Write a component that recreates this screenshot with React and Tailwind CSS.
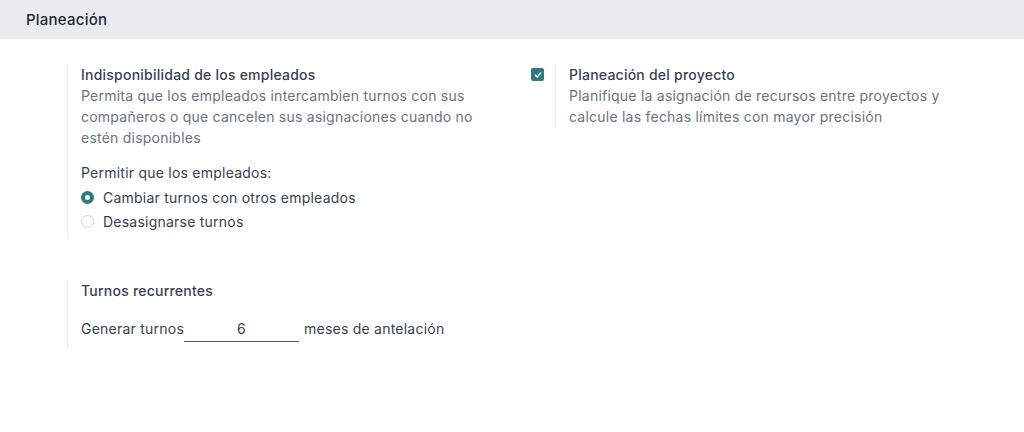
import { useState } from 'react';

const Radio = ({ checked, label, onClick }) => (
    <label className="flex items-center h-[24px] cursor-pointer" onClick={onClick}>
        {checked ? (
            <span className="w-[13px] h-[13px] rounded-full bg-[#2e7a7c] flex items-center justify-center">
                <span className="w-[5px] h-[5px] rounded-full bg-white" />
            </span>
        ) : (
            <span className="w-[13px] h-[13px] rounded-full border border-[#d0d4d9] bg-white" />
        )}
        <span className="ml-[9px] text-[#374151]">{label}</span>
    </label>
);

const App = () => {
    const [swap, setSwap] = useState(true);
    const [project, setProject] = useState(true);

    return (
        <div className="w-[1024px] h-[432px] bg-white text-[14px] leading-[21px] tracking-[0.23px]" style={{ fontFamily: 'Inter, "Noto Sans", sans-serif' }}>
            <div className="h-[39px] bg-[#e9ecef] flex items-center pl-[26px]">
                <h2 className="text-[15px] font-medium text-[#1f2937]">Planeación</h2>
            </div>

            <div className="pl-[31px] pr-[17px] pt-[25px]">
                <div className="grid grid-cols-2">
                    <div className="flex">
                        <div className="w-[36px] shrink-0" />
                        <div className="border-l border-[#e5e7eb] pl-[13px] pb-[6px]">
                            <div className="font-medium text-[#374151]">Indisponibilidad de los empleados</div>
                            <div className="text-[#6b7280] w-[405px]">
                                Permita que los empleados intercambien turnos con sus compañeros o que cancelen sus asignaciones cuando no estén disponibles
                            </div>
                            <div className="mt-[14px] text-[#374151]">Permitir que los empleados:</div>
                            <div className="mt-[2px]">
                                <Radio checked={swap} label="Cambiar turnos con otros empleados" onClick={() => setSwap(true)} />
                                <Radio checked={!swap} label="Desasignarse turnos" onClick={() => setSwap(false)} />
                            </div>
                        </div>
                    </div>

                    <div className="flex items-start">
                        <div className="w-[36px] shrink-0 pl-[12px] pt-[4px]">
                            <button
                                onClick={() => setProject(!project)}
                                className={`w-[13px] h-[13px] rounded-[2px] flex items-center justify-center ${project ? 'bg-[#2e7a7c]' : 'border border-[#d1d5db] bg-white'}`}
                            >
                                {project && (
                                    <svg width="8" height="8" viewBox="0 0 8 8" fill="none">
                                        <path d="M1.3 4.2 L3.2 6 L6.7 2" stroke="white" strokeWidth="1.5" strokeLinecap="round" strokeLinejoin="round" />
                                    </svg>
                                )}
                            </button>
                        </div>
                        <div className="border-l border-[#e5e7eb] pl-[13px] pb-[1px]">
                            <div className="font-medium text-[#374151]">Planeación del proyecto</div>
                            <div className="text-[#6b7280] w-[390px]">
                                Planifique la asignación de recursos entre proyectos y calcule las fechas límites con mayor precisión
                            </div>
                        </div>
                    </div>
                </div>

                <div className="grid grid-cols-2 mt-[41px]">
                    <div className="flex">
                        <div className="w-[36px] shrink-0" />
                        <div className="border-l border-[#e5e7eb] pl-[13px] pb-[6px]">
                            <div className="font-medium text-[#374151]">Turnos recurrentes</div>
                            <div className="mt-[14px] flex items-center text-[#374151]">
                                <span>Generar turnos</span>
                                <input
                                    defaultValue="6"
                                    className="w-[115px] h-[27px] text-center border-b border-[#4b5563] outline-none bg-transparent text-[#374151]"
                                    style={{ fontFamily: 'inherit', fontSize: 'inherit', letterSpacing: 'inherit' }}
                                />
                                <span className="ml-[5px]">meses de antelación</span>
                            </div>
                        </div>
                    </div>
                    <div />
                </div>
            </div>
        </div>
    );
};

export default App;
